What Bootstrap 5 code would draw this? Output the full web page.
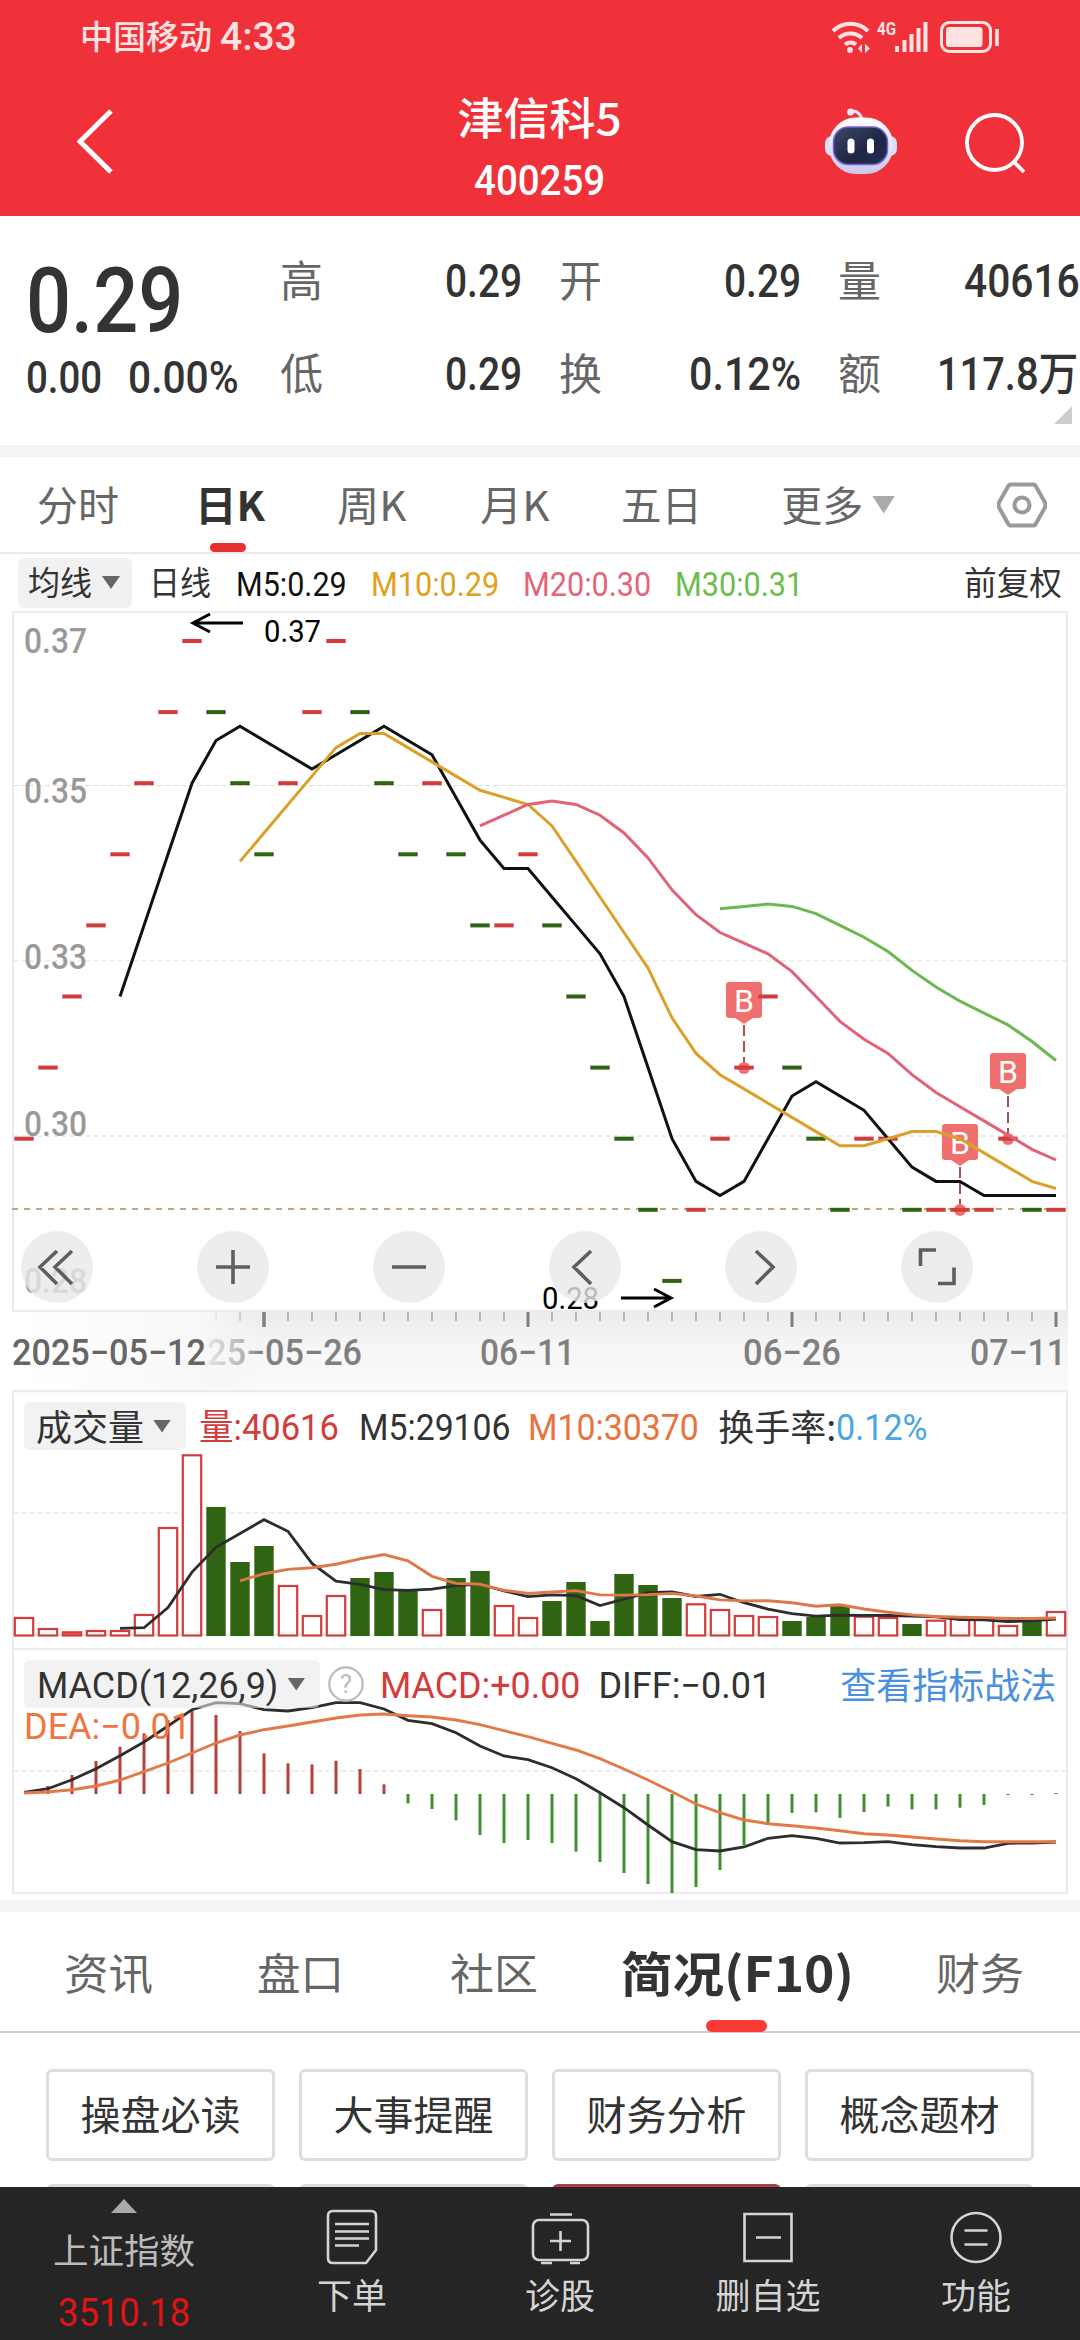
<!DOCTYPE html>
<html lang="zh-CN">
<head>
<meta charset="utf-8">
<meta name="viewport" content="width=device-width, initial-scale=1">
<title>津信科5 400259</title>
<link href="https://cdn.jsdelivr.net/npm/bootstrap@5.3.0/dist/css/bootstrap.min.css" rel="stylesheet">
<style>
body{width:1080px;height:2340px;overflow:hidden;background:#fff;color:#333;font-family:Roboto,"Noto Sans CJK SC",sans-serif;line-height:1}
svg{display:block}
[data-w]{display:inline-block;white-space:nowrap;transform-origin:0 50%;flex:none}
.cjk{font-family:"Noto Sans CJK SC",sans-serif;line-height:1;padding-bottom:3px}
.topbar{height:216px;background:#f13139;color:#fff}
.statusrow{height:72px;padding:2px 79px 0 80px;color:#ffe3e3}
.titlerow{height:144px;padding:0 53px 0 77px}
.titlecol{padding-top:22px;height:144px;margin-right:20px}
.quote{height:229px}
.pricecol{width:280px;padding-left:26px}
.bigprice{font-size:91px;font-weight:500;height:93px;line-height:93px;margin-top:39px}
.chg{font-size:44px;font-weight:500;gap:26px;height:58px;margin-top:1px}
.statgrid{display:grid;grid-template-columns:repeat(3,242px);column-gap:37px;padding-top:18px;grid-auto-rows:93px}
.statgrid .cjk{font-size:43px;color:#666;padding-bottom:5px}
.statgrid .val{font-size:46px;font-weight:500}
.corner{width:18px;height:18px;margin:-14px 8px 0 auto;background:#ccc;clip-path:polygon(100% 0,100% 100%,0 100%)}
.band{height:12px;background:#f4f4f4}
.ktabs{height:97px;border-bottom:2px solid #e9e9e9;padding-left:37px;font-size:41px;color:#666}
.ktabs .on,.ftabs .on{color:#333;font-weight:700}
.underbar{height:9px;width:36px;border-radius:5px;background:#e53030;position:absolute;top:86px;left:210px}
.legend1{height:57px;padding-left:18px;font-size:33px}
.legend1>span:not(.cjk),.over span:not(.cjk){padding-top:3px}
.chip{background:#f1f1f1;border-radius:6px;height:50px;color:#333}
.tri{width:18px;height:13px;background:#666;clip-path:polygon(0 0,100% 0,50% 100%)}
.pane{position:relative}
.over{position:absolute;left:24px;right:0;height:48px;font-size:36px}
.over .chip{height:48px;background:rgba(233,233,233,.58)}
.ftabs{height:121px;border-bottom:2px solid #ccc;font-size:43px;color:#666;position:relative;padding:2px 0 0 64px}
.ftabs .underbar{top:108px;left:706px;width:61px;height:12px;border-radius:6px;background:#fb3b33}
.tiles{display:grid;grid-template-columns:repeat(4,229px);column-gap:24px;row-gap:23px;padding:36px 0 0 46px;height:154px;overflow:hidden}
.tiles .btn{height:92px;border:3px solid #ddd;border-radius:6px;font-size:40px;color:#333;padding:0 0 5px;background:#fff}
.tiles .hot{border-color:#b04048}
.dock{height:153px;background:#252525;color:#d4d4d4;font-size:35px}
.dock .first{width:248px}
.dock .item{width:208px;padding-top:19px}
.idx{color:#e01414;font-size:38px}
</style>
</head>
<body>
<header class="topbar">
  <div class="statusrow d-flex align-items-center">
    <span class="cjk" style="font-size:33px;font-weight:500" data-w="132">中国移动</span>
    <span class="ms-2" style="font-size:39px;font-weight:500" data-w="77">4:33</span>
    <svg class="ms-auto" width="170" height="36" viewBox="833 18 170 36" fill="none" stroke="#ffe3e3" stroke-width="4">
      <path d="M835 30a25 25 0 0 1 35 0M841 37a17 17 0 0 1 23 0M847 43.500a9 9 0 0 1 11 0"/>
      <circle cx="852" cy="49" r="3" fill="#ffe3e3" stroke="none"/>
      <path d="M864 43v9l-4-4.500zM867 43v9l5-4.500z" fill="#ffe3e3" stroke="none"/>
      <text x="879" y="34" font-size="18" font-weight="700" fill="#ffe3e3" stroke="none" textLength="19" lengthAdjust="spacingAndGlyphs">4G</text>
      <path d="M899 45v6M906.500 39v12M913.500 33v18M920.500 27v24M927.500 21v30"/>
      <rect x="943.500" y="21.500" width="49" height="29" rx="8" stroke-width="3"/>
      <rect x="948" y="26" width="36.500" height="20" rx="3" fill="#ffe3e3" stroke="none"/>
      <path d="M999 28v17" stroke-width="3.500"/>
    </svg>
  </div>
  <div class="titlerow d-flex justify-content-between">
    <svg width="200" height="144" viewBox="77 72 200 144"><path d="M111 111L80 141.500l31 30.500" fill="none" stroke="#fff" stroke-width="5"/></svg>
    <div class="titlecol d-flex flex-column align-items-center">
      <span class="cjk" style="font-size:44px;font-weight:500;height:48px" data-w="164">津信科5</span>
      <span style="font-size:42px;font-weight:500;margin-top:18px" data-w="131">400259</span>
    </div>
    <svg width="204" height="144" viewBox="823 72 204 144">
      <defs><linearGradient id="rb" x1="0" y1="0" x2="0" y2="1"><stop offset="0" stop-color="#fff"/><stop offset="1" stop-color="#c9c8ee"/></linearGradient>
      <linearGradient id="rf" x1="0" y1="0" x2="1" y2="1"><stop offset="0" stop-color="#3d4766"/><stop offset=".6" stop-color="#1d2745"/><stop offset="1" stop-color="#252c56"/></linearGradient></defs>
      <path d="M851 111q8-1 11 8" fill="none" stroke="#eee7f4" stroke-width="3"/><circle cx="850.500" cy="112" r="3.500" fill="#eee7f4"/>
      <rect x="825" y="136" width="72" height="20" rx="7" fill="#d8dcf7"/>
      <rect x="829" y="117.500" width="64" height="56.500" rx="27" fill="url(#rb)"/>
      <rect x="833.500" y="127" width="54" height="37.500" rx="15" fill="url(#rf)" stroke="#7a5fd0" stroke-width="1.500"/>
      <rect x="847.500" y="138.500" width="7" height="15" rx="3.500" fill="#fff"/><rect x="867" y="138.500" width="7" height="15" rx="3.500" fill="#fff"/>
      <circle cx="994.500" cy="142.500" r="27.500" fill="none" stroke="#fff" stroke-width="3.800"/><path d="M1013 161l11 11" stroke="#fff" stroke-width="3.800"/>
    </svg>
  </div>
</header>

<section class="quote">
  <div class="d-flex">
    <div class="pricecol">
      <div class="bigprice"><span data-w="157">0.29</span></div>
      <div class="chg d-flex align-items-center"><span data-w="76">0.00</span><span data-w="111">0.00%</span></div>
    </div>
    <div class="statgrid">
      <div class="d-flex justify-content-between align-items-center"><span class="cjk">高</span><span class="val" data-w="77">0.29</span></div>
      <div class="d-flex justify-content-between align-items-center"><span class="cjk">开</span><span class="val" data-w="77">0.29</span></div>
      <div class="d-flex justify-content-between align-items-center"><span class="cjk">量</span><span class="val" data-w="116">40616</span></div>
      <div class="d-flex justify-content-between align-items-center"><span class="cjk">低</span><span class="val" data-w="77">0.29</span></div>
      <div class="d-flex justify-content-between align-items-center"><span class="cjk">换</span><span class="val" data-w="112">0.12%</span></div>
      <div class="d-flex justify-content-between align-items-center"><span class="cjk">额</span><span class="val" style="margin-right:2px" data-w="141">117.8万</span></div>
    </div>
  </div>
  <div class="corner"></div>
</section>
<div class="band"></div>

<nav class="ktabs d-flex align-items-center pane">
  <span class="cjk" data-w="82">分时</span>
  <span class="cjk on" style="margin-left:76px" data-w="70">日K</span>
  <span class="cjk" style="margin-left:72px" data-w="70">周K</span>
  <span class="cjk" style="margin-left:73px" data-w="70">月K</span>
  <span class="cjk" style="margin-left:72px" data-w="81">五日</span>
  <span class="cjk" style="margin-left:79px" data-w="82">更多</span>
  <i class="tri" style="margin-left:9px;width:23px;height:18px;background:#aaa"></i>
  <svg style="margin-left:102px" width="50" height="50" viewBox="0 0 50 50" fill="none" stroke="#999" stroke-width="4"><path d="M14 4.500h22q2 0 3 2l9 16q1 2.500 0 5l-9 16q-1 2-3 2H14q-2 0-3-2l-9-16q-1-2.500 0-5l9-16q1-2 3-2z"/><circle cx="25" cy="25" r="7.500"/></svg>
  <div class="underbar"></div>
</nav>
<div class="legend1 d-flex align-items-center">
  <div class="chip d-flex align-items-center" style="width:114px;padding-left:10px"><span class="cjk" data-w="64">均线</span><i class="tri" style="margin-left:10px"></i></div>
  <span class="cjk" style="margin-left:17px" data-w="62">日线</span>
  <span style="margin-left:25px;color:#111" data-w="111">M5:0.29</span>
  <span style="margin-left:24px;color:#e0a020" data-w="128">M10:0.29</span>
  <span style="margin-left:24px;color:#e4657a" data-w="128">M20:0.30</span>
  <span style="margin-left:24px;color:#6bbd4c" data-w="128">M30:0.31</span>
  <span class="cjk" style="margin-left:161px" data-w="98">前复权</span>
</div>

<svg id="kline" width="1080" height="779" viewBox="0 611 1080 779"></svg>

<div class="pane" style="height:252px">
  <svg id="vol" width="1080" height="252" viewBox="0 1390 1080 252"></svg>
  <div class="over d-flex align-items-center" style="top:12px">
    <div class="chip d-flex align-items-center" style="width:162px;padding-left:12px"><span class="cjk" data-w="108">成交量</span><i class="tri" style="margin-left:9px"></i></div>
    <span style="margin-left:13px;color:#d23c3c" data-w="140">量:40616</span>
    <span style="margin-left:20px" data-w="152">M5:29106</span>
    <span style="margin-left:18px;color:#e8733f" data-w="171">M10:30370</span>
    <span class="cjk" style="margin-left:19px" data-w="118">换手率:</span>
    <span style="margin-left:0;color:#4ba6e0" data-w="92">0.12%</span>
  </div>
</div>

<div class="pane" style="height:258px">
  <svg id="macd" width="1080" height="258" viewBox="0 1642 1080 258"></svg>
  <div class="over d-flex align-items-center" style="top:18px">
    <div class="chip d-flex align-items-center" style="width:296px;padding-left:13px"><span data-w="241">MACD(12,26,9)</span><i class="tri" style="margin-left:9px"></i></div>
    <svg style="margin-left:7px" width="38" height="38" viewBox="0 0 38 38"><circle cx="19" cy="19" r="16.700" fill="none" stroke="#bbb" stroke-width="2.200"/><text x="19" y="28" text-anchor="middle" font-size="26" fill="#bbb">?</text></svg>
    <span style="margin-left:15px;color:#d23c3c" data-w="200">MACD:+0.00</span>
    <span style="margin-left:18px" data-w="173">DIFF:−0.01</span>
    <span class="cjk" style="margin-left:69px;color:#4a90e2" data-w="216">查看指标战法</span>
  </div>
  <div class="over d-flex align-items-center" style="top:59px"><span style="color:#f0753f" data-w="167">DEA:−0.01</span></div>
</div>
<div class="band"></div>

<nav class="ftabs d-flex align-items-center">
  <span class="cjk" data-w="89">资讯</span>
  <span class="cjk" style="margin-left:104px" data-w="87">盘口</span>
  <span class="cjk" style="margin-left:106px" data-w="88">社区</span>
  <span class="cjk on" style="margin-left:83px;font-size:48px" data-w="233">简况(F10)</span>
  <span class="cjk" style="margin-left:82px" data-w="88">财务</span>
  <div class="underbar"></div>
</nav>
<div class="tiles">
  <button class="btn cjk">操盘必读</button><button class="btn cjk">大事提醒</button><button class="btn cjk">财务分析</button><button class="btn cjk">概念题材</button>
  <button class="btn"></button><button class="btn"></button><button class="btn hot"></button><button class="btn"></button>
</div>

<footer class="dock d-flex">
  <div class="first d-flex flex-column align-items-center">
    <i class="tri" style="width:26px;height:14px;margin-top:12px;background:#aaa;transform:rotate(180deg)"></i>
    <span class="cjk" style="margin-top:18px;color:#bbb" data-w="142">上证指数</span>
    <span class="idx" style="margin-top:25px" data-w="132">3510.18</span>
  </div>
  <div class="item d-flex flex-column align-items-center">
    <svg width="60" height="60" viewBox="0 0 60 60" fill="none" stroke="#d4d4d4" stroke-width="2.600"><path d="M11 5h38q5 0 5 5v34L44 57H11q-5 0-5-5V10q0-5 5-5z"/><path d="M13 18h34M13 25.500h34M13 32.500h34M13 39.500h24"/></svg>
    <span class="cjk" style="margin-top:10px">下单</span>
  </div>
  <div class="item d-flex flex-column align-items-center">
    <svg width="60" height="60" viewBox="0 0 60 60" fill="none" stroke="#d4d4d4" stroke-width="2.600"><rect x="3" y="14" width="55" height="40" rx="6"/><path d="M20 8.500h22M30.500 25v20M20 35h21M11 57h11M40 57h10"/></svg>
    <span class="cjk" style="margin-top:10px">诊股</span>
  </div>
  <div class="item d-flex flex-column align-items-center">
    <svg width="60" height="60" viewBox="0 0 60 60" fill="none" stroke="#d4d4d4" stroke-width="2.600"><path d="M6.500 8h47v47h-47zM18 31.500h25"/></svg>
    <span class="cjk" style="margin-top:10px">删自选</span>
  </div>
  <div class="item d-flex flex-column align-items-center">
    <svg width="60" height="60" viewBox="0 0 60 60" fill="none" stroke="#d4d4d4" stroke-width="2.600"><circle cx="30" cy="31.500" r="24.500"/><path d="M18.500 24.500h23M18.500 38.500h23"/></svg>
    <span class="cjk" style="margin-top:10px">功能</span>
  </div>
</footer>

<script>
// Squeeze each figure to its column width.
document.querySelectorAll('[data-w]').forEach(function(e){
  var w=+e.dataset.w,n=e.offsetWidth;
  if(getComputedStyle(e.parentNode).flexDirection==='column'){e.style.transformOrigin='50% 50%';}
  else e.style.marginRight=((parseFloat(e.style.marginRight)||0)+w-n)+'px';
  e.style.transform='scaleX('+w/n+')';
});
var X=function(i){return 24+24*i};
var line=function(a,y,from,c,w){return '<polyline fill="none" stroke="'+c+'" stroke-width="'+(w||3)+'" points="'+a.slice(from).map(function(v,k){return X(k+from)+','+y(v).toFixed(1)}).join(' ')+'"/>'};
var ma=function(a,n){return a.map(function(_,i){if(i<n-1)return 0;var s=0;for(var k=0;k<n;k++)s+=a[i-k];return s/n})};
var L=function(x1,y1,x2,y2,c,w,d){return '<path d="M'+x1+' '+y1+'L'+x2+' '+y2+'" stroke="'+c+'" stroke-width="'+w+'"'+(d?' stroke-dasharray="'+d+'"':'')+' fill="none"/>'};
var T=function(s,x,y,w,f,c,o){return '<text x="'+x+'" y="'+y+'" font-size="'+f+'" fill="'+c+'" textLength="'+w+'" lengthAdjust="spacingAndGlyphs" '+(o||'')+'>'+s+'</text>'};
var R=function(x,y,w,h,c,o){return '<rect x="'+x+'" y="'+y+'" width="'+w+'" height="'+h+'" fill="'+c+'" '+(o||'')+'/>'};
var RED='#d23c3c',GRN='#2f6413';

// Closing price in cents and direction of the day
var close=[30,31,32,33,34,35,36,37,36,35,34,35,36,37,36,35,34,35,34,33,33,34,33,32,31,30,29,28,29,30,31,32,31,30,29,30,30,29,29,29,29,30,29,29];
var dir='rrrrrrrrgggrrrgggrggrrggggggrrrrgggrrgrrrrgr';
var PY=function(v){return 641+(37-v)*71.1};
var h='<defs><linearGradient id="ax" x1="0" y1="0" x2="0" y2="1"><stop offset="0" stop-color="#ebebeb"/><stop offset=".5" stop-color="#f7f7f7"/><stop offset="1" stop-color="#fafafa"/></linearGradient><linearGradient id="fd"><stop offset="0" stop-color="#fff"/><stop offset=".76" stop-color="#f8f8f8"/><stop offset="1" stop-color="#f4f4f4" stop-opacity="0"/></linearGradient><linearGradient id="tf" gradientUnits="userSpaceOnUse" x1="205" y1="0" x2="262" y2="0"><stop offset="0" stop-color="#e8e8e8"/><stop offset=".6" stop-color="#bbb"/><stop offset="1" stop-color="#808080"/></linearGradient></defs>';
h+=R(13,1311,1055,79,'url(#ax)');
for(var i=8;i<44;i++){var big=(i-10)%11===0;h+=L(X(i),1312,X(i),big?1327:1321,big?'#808080':'#999',big?3:1.3)}
h+=R(12,1312,250,78,'url(#fd)')+T('2025−05−12',12,1365,194,36,'#666','font-weight="500"');
h+=L(264,1312,264,1327,'#808080',3)+T('25−05−26',207,1365,155,36,'url(#tf)','font-weight="500"')+T('06−11',480,1365,95,36,'#808080','font-weight="500"')+T('06−26',743,1365,98,36,'#808080','font-weight="500"')+T('07−11',970,1365,96,36,'#808080','font-weight="500"');
h+='<rect x="13" y="612" width="1054" height="699" fill="none" stroke="#ebebeb" stroke-width="2"/>';
[785.5,961,1136].forEach(function(y){h+=L(13,y,1067,y,'#ddd',1.2,'5 3')});
h+=L(12,1209,1067,1209,'#c0a77e',2,'6 6');
[['0.37',653],['0.35',803],['0.33',969],['0.30',1136],['0.28',1293]].forEach(function(a){h+=T(a[0],24,a[1],63,35,'#999','font-weight="500"')});
[[30,982],[41,1053],[39,1124]].forEach(function(b){var x=X(b[0]),y=b[1];
 h+=L(x,y+43,x,y+86,'#a85050',2,'11 5')+'<g fill="#f06f6f"><rect x="'+(x-18)+'" y="'+y+'" width="36" height="36" rx="3"/><path d="M'+(x-9)+' '+(y+36)+'h18l-9 6z"/><circle cx="'+x+'" cy="'+(y+86)+'" r="6"/></g><text x="'+x+'" y="'+(y+30)+'" font-size="32" text-anchor="middle" fill="#fff">B</text>'});
close.forEach(function(v,i){h+=R(X(i)-9.7,PY(v)-2,19.4,4,dir[i]==='r'?RED:GRN)});
h+=line(ma(close,5),PY,4,'#111')+line(ma(close,10),PY,9,'#dba02a')+line(ma(close,20),PY,19,'#e06377')+line(ma(close,30),PY,29,'#6bb850');
h+='<g fill="none" stroke="#000" stroke-width="3"><path d="M243 623H193M210 614l-17 9 17 9M621 1298h50M654 1289l17 9-17 9"/></g>';
h+=T('0.37',264,642,57,31,'#000')+T('0.28',542,1309,57,31,'#000');
[57,233,409,585,761,937].forEach(function(x){h+='<circle cx="'+x+'" cy="1267" r="36" fill="#e8e8e8" fill-opacity=".8"/>'});
h+='<path fill="none" stroke="#5e5e5e" stroke-width="3.600" d="M57 1251l-17 16 17 17M72 1251l-17 16 17 17M216 1267h34M233 1250v34M392 1267h34M591 1251l-17 16 17 17M756 1251l17 16-17 17M920.500 1266v-16h15.500M938 1283.500h16v-16"/>';
document.getElementById('kline').innerHTML=h;

// Bar tops, thirds of a pixel below the top of the pane
var vt=[744,777,787,783,783,735,474,256,411,576,528,648,738,678,624,606,660,720,624,603,708,744,693,636,753,612,645,684,703,720,738,741,753,741,705,740,744,762,752,744,747,768,753,726];
var VY=function(v){return 1370+v/3};
h=R(13,1390,1055,6,'#fafafa')+'<path d="M13 1642V1391H1067V1642M13 1635H1067" fill="none" stroke="#ebebeb" stroke-width="2"/>'+L(13,1513,1067,1513,'#e8e8e8',1.6,'5 3');
vt.forEach(function(v,i){var y=VY(v);h+=dir[i]==='r'?'<rect x="'+(X(i)-9.2)+'" y="'+y.toFixed(1)+'" width="18.400" height="'+(1635.5-y).toFixed(1)+'" fill="'+(i===2?'#f06060':'#fff')+'" stroke="'+RED+'" stroke-width="2.200"/>':R(X(i)-9.7,y,19.4,1636-y,GRN)});
h+=line(ma(vt,5),VY,4,'#2d2d2d',2.8)+line(ma(vt,10),VY,9,'#df7848',2.9);
document.getElementById('vol').innerHTML=h;

var hist=[462,438,405,363,320,280,240,213,225,273,340,370,373,362,387,433,490,507,541,585,609,600,609,635,666,699,732,759,741,690,615,549,519,517,534,516,500,508,508,503,495,465,465,459];
var diff=[457,446,419,386,347,306,258,209,188,191,209,213,203,188,188,207,241,251,278,318,348,359,383,416,458,503,555,605,629,633,621,595,587,595,609,608,605,614,620,624,624,610,609,606];
var dea=[459,456,449,438,420,395,369,339,309,285,269,258,246,234,225,222,227,231,240,254,272,290,310,330,356,387,420,455,492,518,540,551,557,564,572,581,585,591,597,602,605,605,605,605];
var MY=function(v){return 1640+v/3};
h='<path d="M13 1642v7M1067 1642v7M13 1649H1067V1893H13z" fill="none" stroke="#ebebeb" stroke-width="2"/>'+L(13,1771,1067,1771,'#e8e8e8',1.6,'5 3');
hist.forEach(function(v,i){h+=L(X(i),1794,X(i),MY(v),v<462?'#b64040':'#3f8f30',3)});
h+=line(diff,MY,0,'#2d2d2d',2.8)+line(dea,MY,0,'#e27a48',2.9);
document.getElementById('macd').innerHTML=h;
</script>
<script src="https://cdn.jsdelivr.net/npm/bootstrap@5.3.0/dist/js/bootstrap.bundle.min.js"></script>
</body>
</html>
